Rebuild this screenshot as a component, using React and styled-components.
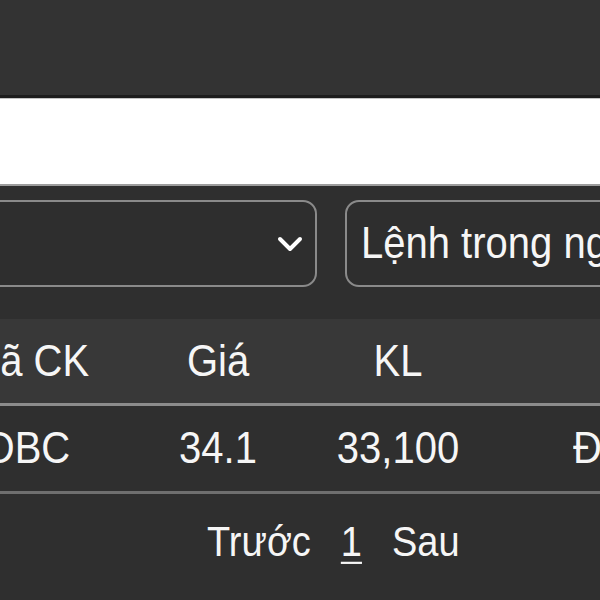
import styled, { createGlobalStyle } from "styled-components"

const GlobalStyle = createGlobalStyle`
  html, body { margin: 0; padding: 0; background: #2f2f2f; overflow: hidden; }
  body { font-family: "Liberation Sans", Arial, sans-serif; color: #f6f6f6; }
`

const Page = styled.div`
  width: 600px;
  height: 600px;
  overflow: hidden;
  display: flex;
  flex-direction: column;
  background: #2f2f2f;
`

const TopBar = styled.header`
  height: 95px;
  flex-shrink: 0;
  background: #333333;
  border-bottom: 3px solid #1d1d1d;
`

const Search = styled.div`
  height: 85px;
  flex-shrink: 0;
  background: #ffffff;
  border-top: 1px solid #c4c4c4;
  border-bottom: 2px solid #9c9c9c;
`

const Filters = styled.div`
  display: flex;
  gap: 28px;
  padding: 14px 0 32px;
  margin-left: -30px;
`

const Select = styled.div`
  box-sizing: border-box;
  height: 87px;
  flex: 0 0 ${(p) => p.$width}px;
  display: flex;
  align-items: center;
  justify-content: space-between;
  padding: 0 12px 0 14px;
  border: 2px solid #8a8a8a;
  border-radius: 14px;
  background: #2e2e2e;
  font-size: 40px;
  white-space: nowrap;
  overflow: hidden;
`

// the source text is tall and narrow, so stretch it vertically a little
const Text = styled.span`
  display: inline-block;
  transform: scaleY(1.1);
`

const Chevron = () => (
  <svg width="26" height="18" viewBox="0 0 26 18">
    <polyline points="3,4 13,14 23,4" fill="none" stroke="#fff" strokeWidth="4" strokeLinecap="round" strokeLinejoin="round" />
  </svg>
)

const Row = styled.div`
  box-sizing: border-box;
  display: grid;
  grid-template-columns: 240px 140px 220px 1fr;
  align-items: center;
  height: ${(p) => p.$height}px;
  margin-left: -92px;
  width: 760px;
  background: ${(p) => p.$bg};
  border-bottom: 3px solid ${(p) => p.$line};
  font-size: 40px;
`

const Cell = styled.div`
  text-align: ${(p) => (p.$left ? "left" : "center")};
  padding-left: ${(p) => (p.$left ? "65px" : "0")};
  white-space: nowrap;
`

const Pager = styled.nav`
  display: flex;
  align-items: center;
  gap: 30px;
  padding: 27px 0 0 207px;
  font-size: 38px;
`

const PageLink = styled(Text)`
  text-decoration: ${(p) => (p.$active ? "underline" : "none")};
  text-underline-offset: 5px;
  text-decoration-thickness: 2px;
`

export default function App() {
  return (
    <>
      <GlobalStyle />
      <Page>
        <TopBar />
        <Search />
        <Filters>
          <Select $width={347}>
            <span />
            <Chevron />
          </Select>
          <Select $width={320}><Text>Lệnh trong ngày</Text></Select>
        </Filters>
        <Row $height={87} $bg="#383838" $line="#8c8c8c">
          <Cell><Text>Mã CK</Text></Cell>
          <Cell><Text>Giá</Text></Cell>
          <Cell><Text>KL</Text></Cell>
          <Cell $left />
        </Row>
        <Row $height={88} $bg="#2f2f2f" $line="#6f6f6f">
          <Cell><Text>DBC</Text></Cell>
          <Cell><Text>34.1</Text></Cell>
          <Cell><Text>33,100</Text></Cell>
          <Cell $left><Text>Đã khớp</Text></Cell>
        </Row>
        <Pager>
          <PageLink>Trước</PageLink>
          <PageLink $active>1</PageLink>
          <PageLink>Sau</PageLink>
        </Pager>
      </Page>
    </>
  )
}
